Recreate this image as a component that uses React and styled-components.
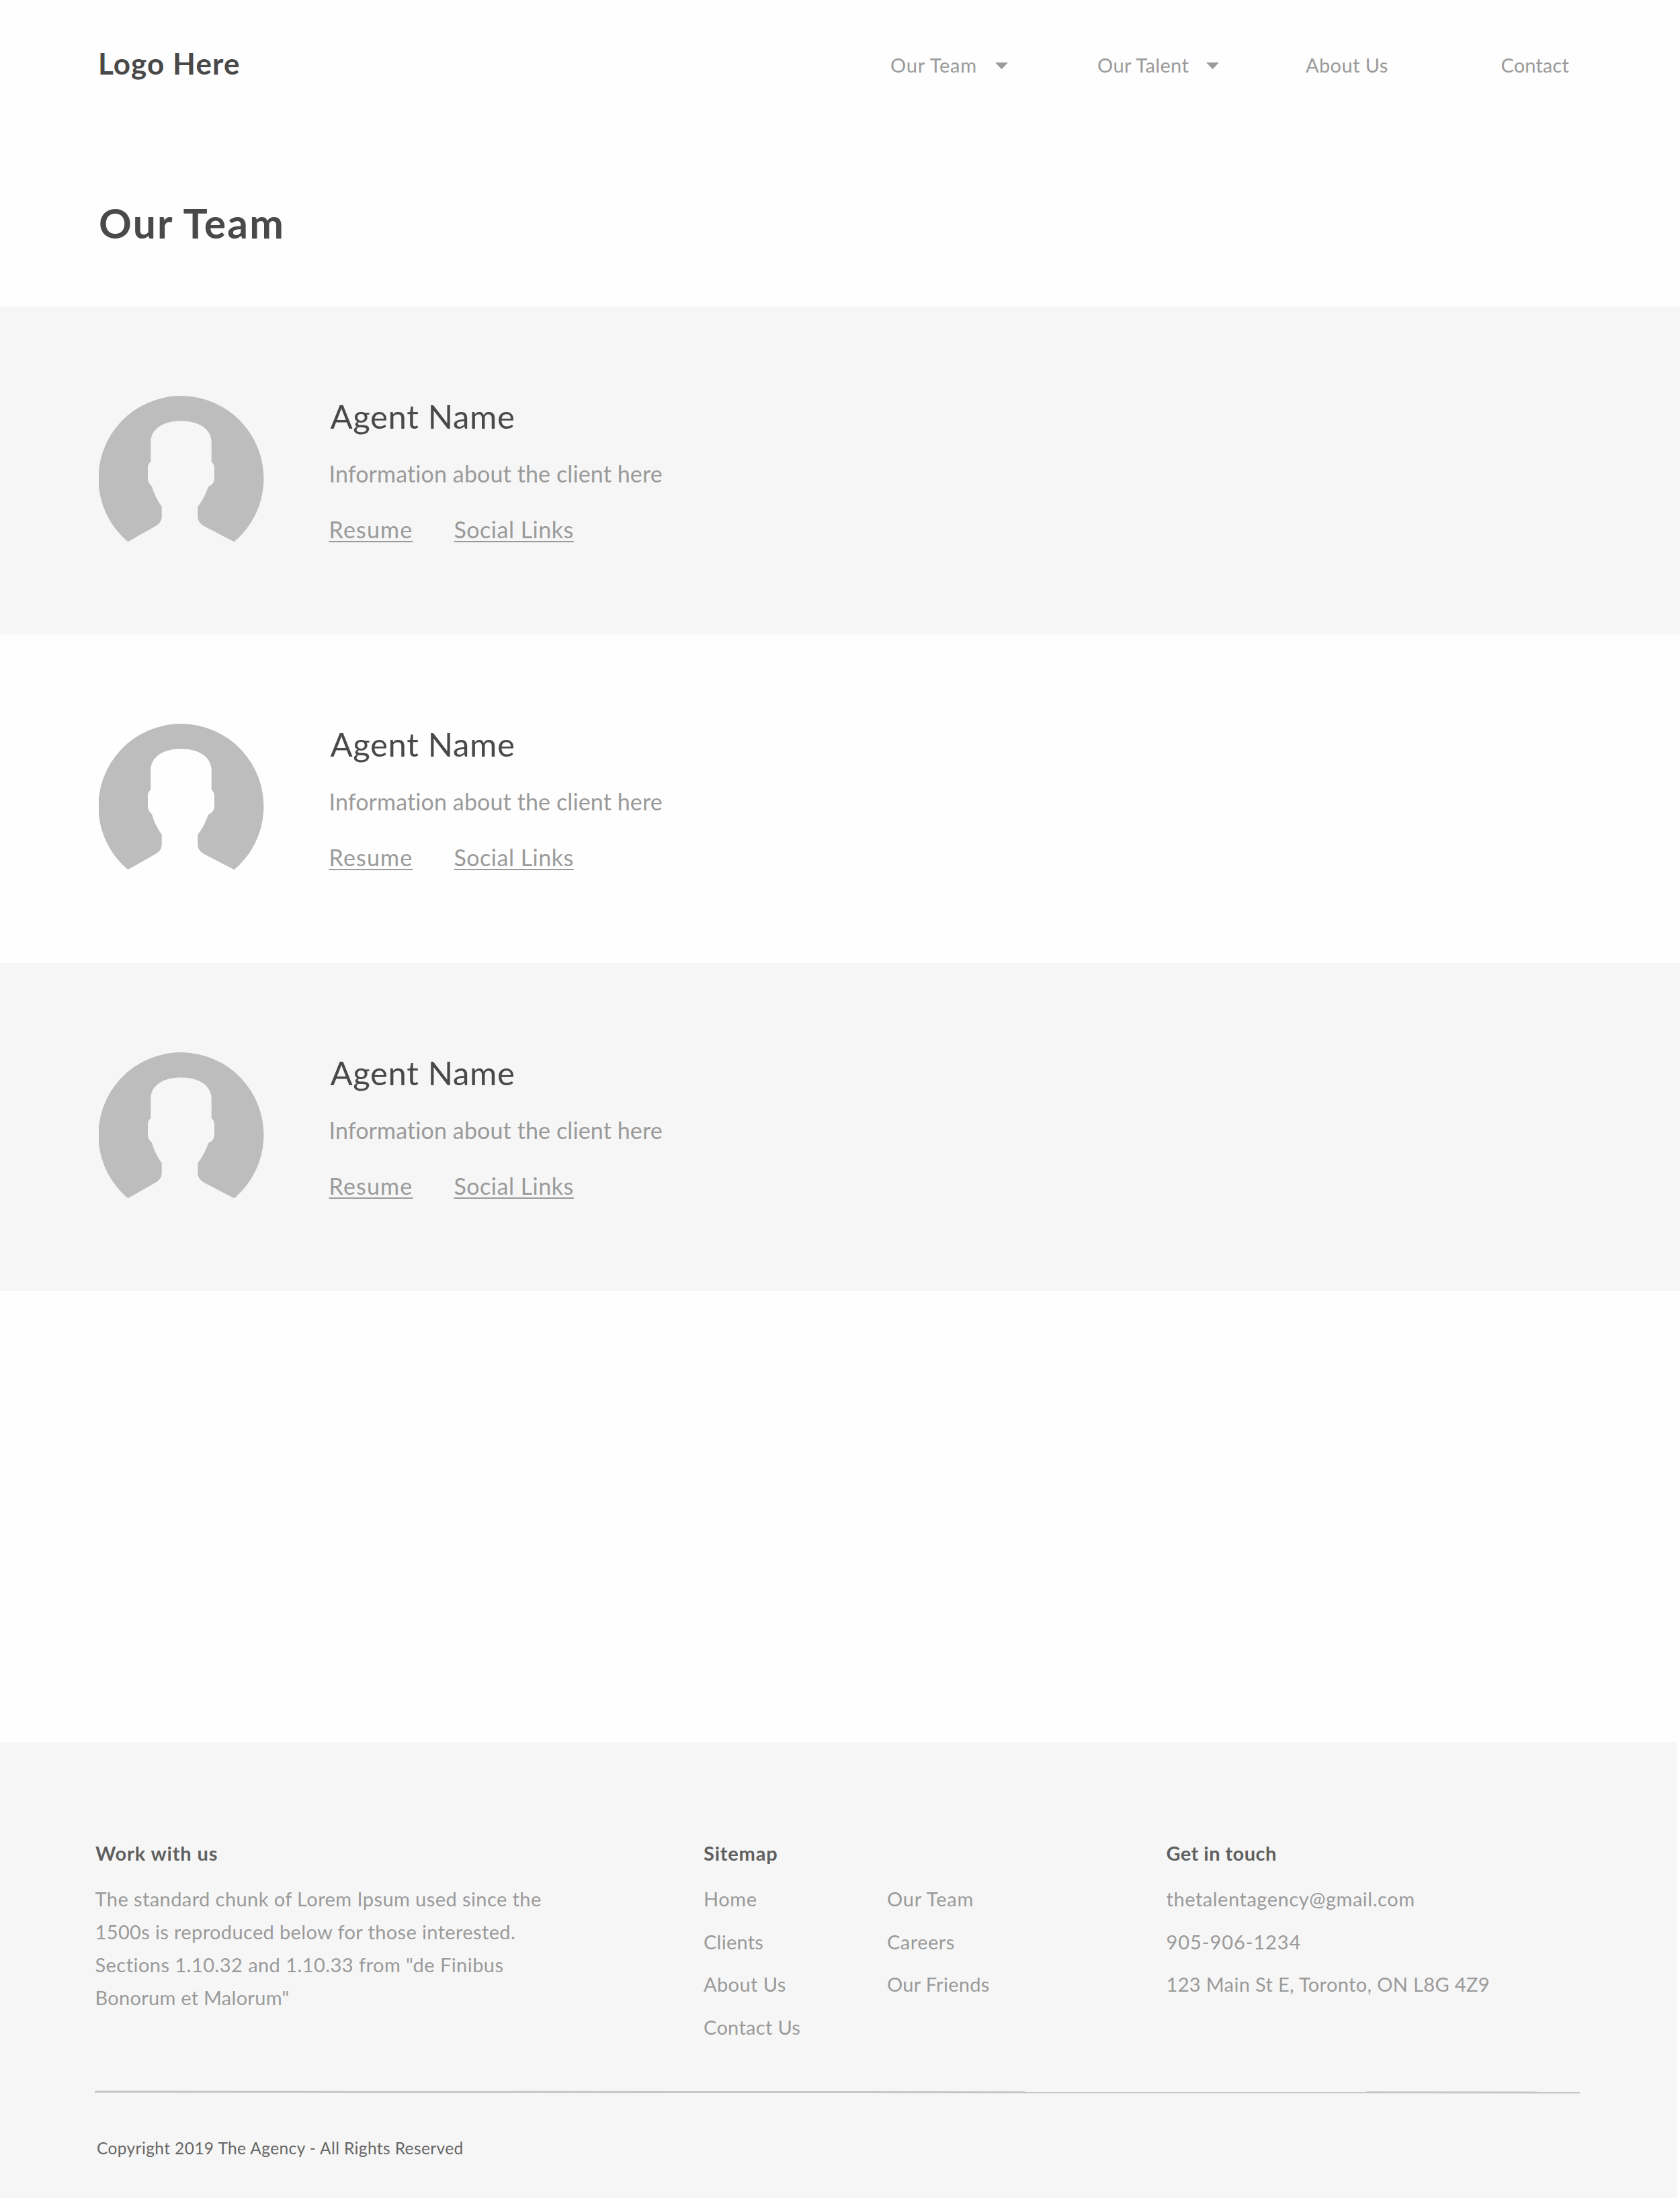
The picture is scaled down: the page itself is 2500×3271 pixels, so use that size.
import React from "react";
import styled, { createGlobalStyle } from "styled-components";


const GlobalStyle = createGlobalStyle`
    * {
        margin: 0;
        padding: 0;
        box-sizing: border-box;
    }

    body {
        background: #fefefe;
        font-family: Lato, "Open Sans", sans-serif;
        font-variant-ligatures: none;
        color: #9a9a9a;
    }

    a {
        color: inherit;
        text-decoration: none;
    }

    ul {
        list-style: none;
    }
`

const Page = styled.div`
    width: 2500px;
    min-height: 3271px;
    display: flex;
    flex-direction: column;
`

const Header = styled.header`
    height: 186px;
    padding: 2px 0 0 146px;
    display: flex;
    align-items: center;
    color: #494949;
`

const Logo = styled.a`
    width: 1179px;
    font-size: 44px;
    line-height: 52px;
    font-weight: 700;
    letter-spacing: 1.1px;
`

const Nav = styled.nav`
    display: grid;
    grid-template-columns: 308px 310px 290.5px auto;
    margin-top: 6px;
    color: #9a9a9a;
`

const NavItem = styled.a`
    display: flex;
    align-items: center;
    gap: ${p => p.$gap || 0}px;
    font-size: 29px;
    line-height: 36px;
    letter-spacing: ${p => p.$track}px;
    white-space: nowrap;

    & > svg {
        margin-top: 2px;
    }
`

const TitleSection = styled.section`
    height: 270px;
    padding: 110px 0 0 147px;

    & > h1 {
        font-size: 60.5px;
        line-height: 72px;
        font-weight: 700;
        letter-spacing: 2.2px;
        color: #494949;
    }
`

const AgentRow = styled.section`
    height: 488.33px;
    padding: 133px 0 0 147px;
    display: flex;
    align-items: flex-start;
    gap: 98.5px;
    background: ${p => p.$shaded ? "#f6f6f6" : "transparent"};
`

const AgentInfo = styled.div`
    white-space: nowrap;
`

const AgentName = styled.h2`
    font-size: 49px;
    line-height: 60px;
    font-weight: 400;
    letter-spacing: .65px;
    color: #494949;
`

const AgentBio = styled.p`
    margin: 36px 0 0 -2px;
    font-size: 34px;
    line-height: 40px;
    letter-spacing: .12px;
`

const AgentLinks = styled.div`
    margin: 43px 0 0 -2px;
    display: grid;
    grid-template-columns: 186px auto;
    justify-content: start;
    font-size: 34px;
    line-height: 40px;
`

const AgentLink = styled.a`
    letter-spacing: ${p => p.$track}px;
    text-decoration: underline;
    text-decoration-thickness: 2px;
    text-underline-offset: 4px;
    text-decoration-skip-ink: none;
`

const Footer = styled.footer`
    width: 2495px;
    height: 679px;
    margin-top: auto;
    padding: 148px 0 0 142px;
    background: #f6f6f6;
`

const FooterColumns = styled.div`
    height: 372px;
    display: grid;
    grid-template-columns: 905px 688.5px auto;
    font-size: 29px;
    white-space: nowrap;
`

const FooterTitle = styled.h3`
    font-size: 29px;
    line-height: 36px;
    font-weight: 700;
    letter-spacing: ${p => p.$track}px;
    color: #5f5f5f;
`

const FooterText = styled.p`
    margin: 26px 0 0 -.5px;
    line-height: 48.9px;
`

const TextLine = styled.span`
    display: block;
    letter-spacing: ${p => p.$track}px;
`

const SitemapLists = styled.div`
    display: grid;
    grid-template-columns: 273px auto;
`

const FooterList = styled.ul`
    margin-top: 32px;
    display: flex;
    flex-direction: column;
    gap: 27.5px;
    line-height: 36px;
`

const FooterItem = styled.li`
    letter-spacing: ${p => p.$track}px;
`

const Divider = styled.hr`
    width: 2210px;
    height: 3px;
    margin-left: -1.5px;
    border: none;
    background: #c6c6c6;
    transform: rotate(.026deg);
`

const Copyright = styled.p`
    margin: 67px 0 0 2px;
    font-size: 24.5px;
    line-height: 30px;
    letter-spacing: .39px;
    color: #666;
`

const Caret = () => (
    <svg width="19" height="10" viewBox="0 0 19 10">
        <path d="M0 0H19L9.5 10Z" fill="#9a9a9a" />
    </svg>
)

const Avatar = () => (
    <svg width="246" height="218" viewBox="0 0 246 218">
        <path
            fill="#bdbdbd"
            d="M43.3 217.3A123 123 0 1 1 201.5 217.3L156.3 193.7Q148 189 147.3 180.7V165
            Q157.5 152 163 135.3Q171 132 172 124V106.7Q171.5 101 167.7 98.3V69
            C167.7 50 150 37.4 122.5 37.4C95 37.4 77.3 50 77.3 69V98.3
            Q73.5 101 73 106.7V124Q73.5 130 79 134.7Q83.5 151 93.7 165V180.7
            Q93 189 84.7 193.7Z"
        />
    </svg>
)

const agents = [1, 2, 3]

const about = [
    { text: "The standard chunk of Lorem Ipsum used since the", track: .42 },
    { text: "1500s is reproduced below for those interested.", track: .37 },
    { text: "Sections 1.10.32 and 1.10.33 from \"de Finibus", track: .45 },
    { text: "Bonorum et Malorum\"", track: .27 },
]

const sitemapMain = [
    { text: "Home", track: .6 },
    { text: "Clients", track: .25 },
    { text: "About Us", track: .4 },
    { text: "Contact Us", track: .3 },
]

const sitemapMore = [
    { text: "Our Team", track: .8 },
    { text: "Careers", track: .47 },
    { text: "Our Friends", track: .28 },
]

const contacts = [
    { text: "thetalentagency@gmail.com", track: .53 },
    { text: "905-906-1234", track: .92 },
    { text: "123 Main St E, Toronto, ON L8G 4Z9", track: .35 },
]

const LinkList = ({ items }) => (
    <FooterList>
        {items.map(item => (
            <FooterItem key={item.text} $track={item.track}>{item.text}</FooterItem>
        ))}
    </FooterList>
)

const App = () => {
    return (
        <>
            <GlobalStyle />
            <Page>
                <Header>
                    <Logo href="#">Logo Here</Logo>

                    <Nav>
                        <NavItem href="#" $track={.75} $gap={27}>Our Team <Caret /></NavItem>
                        <NavItem href="#" $track={.38} $gap={25.5}>Our Talent <Caret /></NavItem>
                        <NavItem href="#" $track={.4}>About Us</NavItem>
                        <NavItem href="#" $track={.1}>Contact</NavItem>
                    </Nav>
                </Header>

                <TitleSection>
                    <h1>Our Team</h1>
                </TitleSection>

                {agents.map((id, i) => (
                    <AgentRow key={id} $shaded={i % 2 === 0}>
                        <Avatar />
                        <AgentInfo>
                            <AgentName>Agent Name</AgentName>
                            <AgentBio>Information about the client here</AgentBio>
                            <AgentLinks>
                                <div><AgentLink href="#" $track={1.2}>Resume</AgentLink></div>
                                <div><AgentLink href="#" $track={.5}>Social Links</AgentLink></div>
                            </AgentLinks>
                        </AgentInfo>
                    </AgentRow>
                ))}

                <Footer>
                    <FooterColumns>
                        <div>
                            <FooterTitle $track={.85}>Work with us</FooterTitle>
                            <FooterText>
                                {about.map(line => (
                                    <TextLine key={line.text} $track={line.track}>{line.text}</TextLine>
                                ))}
                            </FooterText>
                        </div>

                        <div>
                            <FooterTitle $track={.8}>Sitemap</FooterTitle>
                            <SitemapLists>
                                <LinkList items={sitemapMain} />
                                <LinkList items={sitemapMore} />
                            </SitemapLists>
                        </div>

                        <div>
                            <FooterTitle $track={.45}>Get in touch</FooterTitle>
                            <LinkList items={contacts} />
                        </div>
                    </FooterColumns>

                    <Divider />
                    <Copyright>Copyright 2019 The Agency - All Rights Reserved</Copyright>
                </Footer>
            </Page>
        </>
    )
}

export default App;
